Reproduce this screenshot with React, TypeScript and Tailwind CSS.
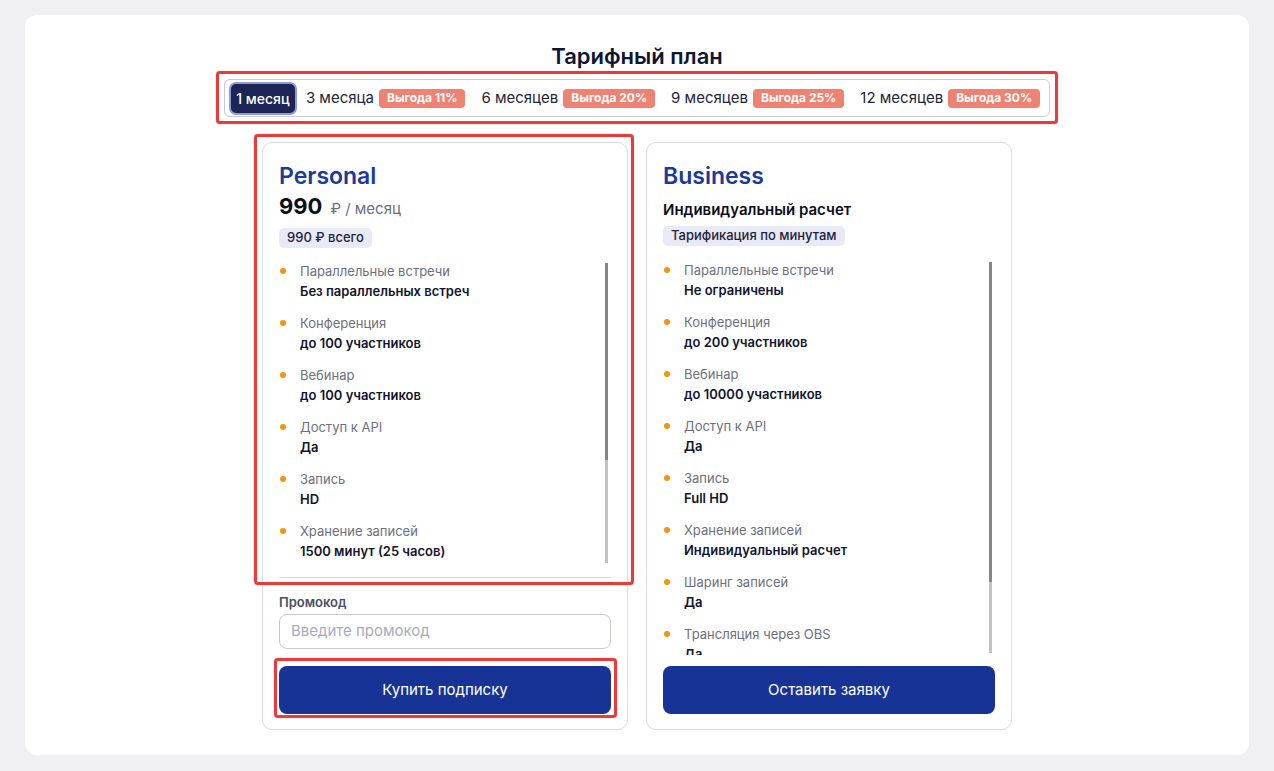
import React from "react";

const tabs = [
  { label: "3 месяца", badge: "Выгода 11%" },
  { label: "6 месяцев", badge: "Выгода 20%" },
  { label: "9 месяцев", badge: "Выгода 25%" },
  { label: "12 месяцев", badge: "Выгода 30%" },
];

const personal = [
  ["Параллельные встречи", "Без параллельных встреч"],
  ["Конференция", "до 100 участников"],
  ["Вебинар", "до 100 участников"],
  ["Доступ к API", "Да"],
  ["Запись", "HD"],
  ["Хранение записей", "1500 минут (25 часов)"],
  ["Шаринг записей", "Нет"],
];

const business = [
  ["Параллельные встречи", "Не ограничены"],
  ["Конференция", "до 200 участников"],
  ["Вебинар", "до 10000 участников"],
  ["Доступ к API", "Да"],
  ["Запись", "Full HD"],
  ["Хранение записей", "Индивидуальный расчет"],
  ["Шаринг записей", "Да"],
  ["Трансляция через OBS", "Да"],
  ["Брендирование", "Да"],
];

function FeatureList({ items }: { items: string[][] }) {
  return (
    <div className="flex flex-col gap-[12px]">
      {items.map(([k, v]) => (
        <div key={k} className="flex">
          <div className="w-[21px] shrink-0 pt-[7px] pl-[1px]">
            <div className="w-[6px] h-[6px] rounded-full bg-[#f7930d]" />
          </div>
          <div className="flex flex-col">
            <span className="text-[13px] leading-[20px] text-[#6b6f80]">{k}</span>
            <span className="text-[13px] leading-[20px] font-semibold text-[#10142e]">{v}</span>
          </div>
        </div>
      ))}
    </div>
  );
}

function Scrollbar({ track, thumb }: { track: string; thumb: string }) {
  return (
    <div className={`absolute right-[3px] top-[2px] w-[3px] bg-[#c1c3c6] ${track}`}>
      <div className={`w-full bg-[#868686] ${thumb}`} />
    </div>
  );
}

export default function App() {
  return (
    <div className="min-h-screen bg-[#f0f0f3] pt-[15px] pb-[16px] px-[25px] font-['Inter',sans-serif]">
      <div className="bg-white rounded-[12px] h-[740px] flex flex-col items-center pt-[27px]">
        <h1 className="text-[22px] leading-[28px] font-semibold text-[#0f1535]">Тарифный план</h1>

        <div className="relative mt-[9px]">
          <div className="flex items-center h-[38px] border border-[#c9c9dc] rounded-[6px] pl-[4px] pr-[1px]">
            <div className="h-[33px] w-[68px] mr-[1px] rounded-[7px] border-2 border-[#8f99d6] bg-[#1c2556] flex items-center justify-center text-white text-[14px] font-medium">
              1 месяц
            </div>
            {tabs.map((t) => (
              <div key={t.label} className="flex items-center px-[8px] h-full">
                <span className="text-[15px] text-[#1e2340]">{t.label}</span>
                <span className="ml-[5px] h-[19px] px-[8px] rounded-[4px] bg-[#ef8272] text-white text-[12px] font-bold flex items-center">
                  {t.badge}
                </span>
              </div>
            ))}
          </div>
          <div className="absolute left-[-8px] right-[-8px] top-[-8px] bottom-[-7px] border-[3px] border-[#ea3b3b] rounded-[4px] shadow-[0_0_1px_rgba(0,0,0,0.5)] pointer-events-none" />
        </div>

        <div className="flex gap-[18px] mt-[25px]">
          {/* Personal */}
          <div className="relative">
            <div className="w-[366px] h-[588px] border border-[#dcdce6] rounded-[10px] px-[16px] pt-[19px] flex flex-col">
              <div className="text-[23px] leading-[28px] font-semibold text-[#1a3a9c]">Personal</div>
              <div className="flex items-baseline h-[28px]">
                <span className="text-[22px] font-bold text-[#0b0d1c]">990</span>
                <span className="ml-[8px] text-[15px] text-[#6b6f80]">₽ / месяц</span>
              </div>
              <div className="mt-[10px] flex">
                <span className="inline-flex items-center h-[20px] px-[8px] rounded-[5px] bg-[#e8eaf5] text-[13px] font-medium text-[#1e2340]">990 ₽ всего</span>
              </div>
              <div className="relative mt-[13px] h-[304px] overflow-hidden">
                <FeatureList items={personal} />
                <Scrollbar track="h-[300px]" thumb="h-[197px]" />
              </div>
              <div className="mt-[12px] border-t border-[#dcdce6]" />
              <div className="mt-[15px] text-[13px] leading-[18px] font-semibold text-[#4a4f63]">Промокод</div>
              <div className="mt-[3px] h-[35px] rounded-[8px] border border-[#c8c9d8] flex items-center px-[11px] text-[15px] text-[#a9abbb]">
                Введите промокод
              </div>
              <div className="relative mt-[17px]">
                <button className="w-full h-[48px] rounded-[8px] bg-[#173395] text-white text-[15px]">Купить подписку</button>
                <div className="absolute left-[-5px] right-[-6px] top-[-8px] bottom-[-4px] border-[3px] border-[#ea3b3b] rounded-[4px] shadow-[0_0_1px_rgba(0,0,0,0.5)] pointer-events-none" />
              </div>
            </div>
            <div className="absolute left-[-8px] right-[-6px] top-[-8px] h-[451px] border-[3px] border-[#ea3b3b] rounded-[4px] shadow-[0_0_1px_rgba(0,0,0,0.5)] pointer-events-none" />
          </div>

          {/* Business */}
          <div className="w-[366px] h-[588px] border border-[#dcdce6] rounded-[10px] px-[16px] pt-[19px] pb-[15px] flex flex-col">
            <div className="text-[23px] leading-[28px] font-semibold text-[#1a3a9c]">Business</div>
            <div className="mt-[9px] text-[15px] leading-[22px] font-semibold text-[#0b0d1c]">Индивидуальный расчет</div>
            <div className="mt-[5px] flex">
              <span className="inline-flex items-center h-[20px] px-[8px] rounded-[5px] bg-[#e8eaf5] text-[13px] font-medium text-[#1e2340]">Тарификация по минутам</span>
            </div>
            <div className="relative mt-[14px] flex-1 min-h-0 overflow-hidden">
              <FeatureList items={business} />
              <Scrollbar track="h-[391px]" thumb="h-[320px]" />
            </div>
            <button className="mt-[11px] shrink-0 w-full h-[48px] rounded-[8px] bg-[#173395] text-white text-[15px]">Оставить заявку</button>
          </div>
        </div>
      </div>
    </div>
  );
}
